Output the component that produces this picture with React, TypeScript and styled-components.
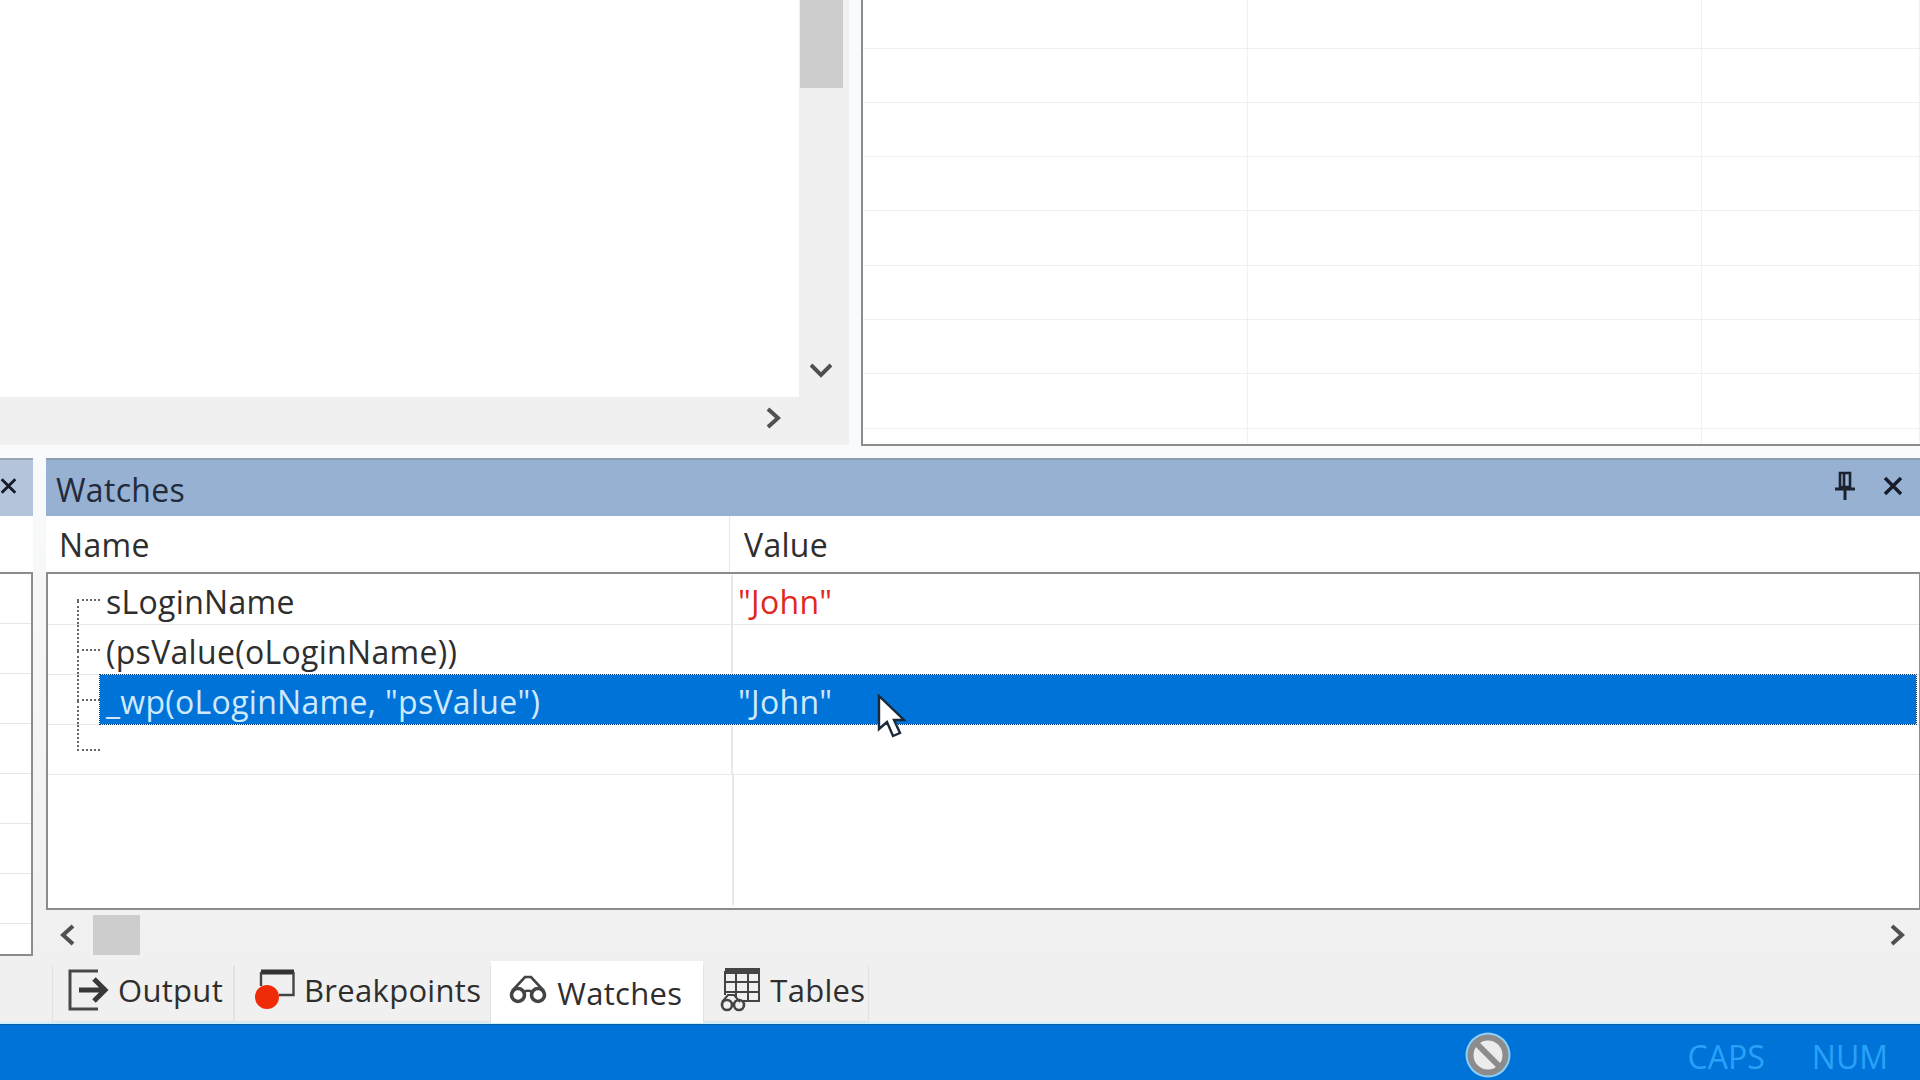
import styled, { createGlobalStyle } from "styled-components";

const GlobalStyle = createGlobalStyle`
    html, body {
        margin: 0;
        padding: 0;
        background: #f0f0f0;
    }
    * {
        box-sizing: border-box;
    }
`

const gridLines = [0, 1, 2, 3, 4, 5, 6, 7, 8]

const watches = [
    {name: 'sLoginName', value: '"John"', part: 'first'},
    {name: '(psValue(oLoginName))', value: '', part: 'middle'},
    {name: '_wp(oLoginName, "psValue")', value: '"John"', part: 'middle', selected: true},
    {name: '', value: '', part: 'last'},
]

const OutputIcon = () => (
    <svg width="41" height="42" viewBox="0 0 41 42" fill="none">
        <path d="M30 2H2v38h28" stroke="#484848" strokeWidth="3"/>
        <path d="M11 21h25M26 10l11 11-11 11" stroke="#383838" strokeWidth="5"/>
    </svg>
)

const BreakpointIcon = () => (
    <svg width="40" height="42" viewBox="0 0 40 42" fill="none">
        <path d="M6 3h33" stroke="#333" strokeWidth="5"/>
        <path d="M6 3v14M38.500 3v23H24" stroke="#444" strokeWidth="2.400"/>
        <circle cx="12" cy="28" r="12" fill="#f02c08"/>
    </svg>
)

const GlassesIcon = () => (
    <svg width="40" height="36" viewBox="0 0 40 36" fill="none" stroke="#444">
        <circle cx="10" cy="20" r="6.500" strokeWidth="3.600"/>
        <circle cx="30" cy="20" r="6.500" strokeWidth="3.600"/>
        <path d="M15 17c3-1.500 7-1.500 10 0M4 16 17 2h6l13 14" strokeWidth="2.600"/>
    </svg>
)

const TablesIcon = () => (
    <svg width="42" height="46" viewBox="0 0 42 46" fill="none" stroke="#444">
        <path d="M6 4h35" strokeWidth="6"/>
        <path d="M6 4v24M40 4v30H22M17 4v26M29 4v30M6 15h34M6 25h34" strokeWidth="2"/>
        <circle cx="8" cy="38" r="5" strokeWidth="2.600" fill="#f0f0f0"/>
        <circle cx="20" cy="38" r="5" strokeWidth="2.600" fill="#f0f0f0"/>
        <path d="M3 35l6-7h6l6 7" strokeWidth="2"/>
    </svg>
)

const PinIcon = () => (
    <svg width="24" height="30" viewBox="0 0 24 30" fill="none" stroke="#1c2230">
        <path d="M7 2h10v14H7zM11 3v13" strokeWidth="2.600"/>
        <path d="M2 18h20M12 18v11" strokeWidth="3"/>
    </svg>
)

const CloseIcon = () => (
    <svg width="20" height="20" viewBox="0 0 20 20" fill="none" stroke="#161c2a" strokeWidth="3.400">
        <path d="M2 2l16 16M18 2 2 18"/>
    </svg>
)

const Chevron = ({dir}: {dir: 'left' | 'right' | 'down'}) => {
    const points = {left: '15,2 5,11 15,20', right: '6,2 16,11 6,20', down: '1,6 11,16 21,6'}[dir]
    return (
        <svg width="22" height="22" viewBox="0 0 22 22" fill="none" stroke="#505050" strokeWidth="4">
            <polyline points={points}/>
        </svg>
    )
}

const BlockedIcon = () => (
    <svg width="46" height="46" viewBox="0 0 46 46" fill="none">
        <circle cx="23" cy="23" r="22.500" fill="#8fd0f6"/>
        <circle cx="23" cy="23" r="20.500" fill="#8c8c8c"/>
        <circle cx="23" cy="23" r="14.500" fill="#ececec"/>
        <path d="M12 12l22 22" stroke="#8c8c8c" strokeWidth="6"/>
    </svg>
)

const Cursor = () => (
    <CursorArt width="30" height="46" viewBox="0 0 30 46">
        <path d="M3 2v33l8-7 6 14 7-3-6-13h10z" fill="#fff" stroke="#1a2a3a" strokeWidth="2.400"/>
    </CursorArt>
)

export default function App() {
    return (
        <Page>
            <GlobalStyle/>
            <TopArea>
                <ListPane>
                    <ListBody>
                        <BlankList/>
                        <VScroll>
                            <ScrollThumb/>
                            <Chevron dir="down"/>
                        </VScroll>
                    </ListBody>
                    <HScroll>
                        <Chevron dir="right"/>
                    </HScroll>
                </ListPane>
                <DataGrid>
                    {gridLines.map(i => (
                        <DataRow key={i}>
                            <DataCell $width={385}/>
                            <DataCell $width={454}/>
                            <DataCell $width={218}/>
                        </DataRow>
                    ))}
                </DataGrid>
            </TopArea>

            <DockRow>
                <StubPanel>
                    <StubHeader><CloseIcon/></StubHeader>
                    <StubColumns/>
                    <StubGrid>
                        {gridLines.map(i => <StubRow key={i}/>)}
                    </StubGrid>
                </StubPanel>

                <WatchPanel>
                    <PanelHeader>
                        <PanelTitle>Watches</PanelTitle>
                        <PanelTools>
                            <PinIcon/>
                            <CloseIcon/>
                        </PanelTools>
                    </PanelHeader>
                    <ColumnHeaders>
                        <NameHeader>Name</NameHeader>
                        <ValueHeader>Value</ValueHeader>
                    </ColumnHeaders>
                    <WatchGrid>
                        {watches.map(w => (
                            <WatchRow key={w.part + w.name}>
                                <Guide>
                                    <GuideTop $part={w.part}/>
                                    <GuideBottom $part={w.part}/>
                                </Guide>
                                <WatchBody $selected={w.selected}>
                                    <WatchName $selected={w.selected}>{w.name}</WatchName>
                                    <WatchValue $selected={w.selected}>
                                        {w.value}
                                        {w.selected && <Cursor/>}
                                    </WatchValue>
                                </WatchBody>
                            </WatchRow>
                        ))}
                        <EmptyArea/>
                    </WatchGrid>
                    <BottomScroll>
                        <Chevron dir="left"/>
                        <BottomThumb/>
                        <Spacer/>
                        <Chevron dir="right"/>
                    </BottomScroll>
                </WatchPanel>
            </DockRow>

            <TabStrip>
                <Tab $lead={15} $trail={10}><OutputIcon/>Output</Tab>
                <Tab $lead={20} $trail={9}><BreakpointIcon/>Breakpoints</Tab>
                <Tab $lead={16} $trail={20} $active><GlassesIcon/>Watches</Tab>
                <Tab $lead={15} $trail={3}><TablesIcon/>Tables</Tab>
            </TabStrip>

            <StatusBar>
                <BlockedIcon/>
                <StatusKey $gap={177}>CAPS</StatusKey>
                <StatusKey $gap={47}>NUM</StatusKey>
            </StatusBar>
        </Page>
    )
}

const uiFont = `"Open Sans", "Noto Sans", sans-serif`

const Page = styled.div`
    width: 1920px;
    height: 1080px;
    overflow: hidden;
    display: flex;
    flex-direction: column;
    background: #f0f0f0;
    font-family: ${uiFont};
    font-size: 32px;
    letter-spacing: 0.3px;
    color: #2e2e2e;
`

const TopArea = styled.div`
    height: 458px;
    flex: none;
    display: flex;
    background: #f9fafb;
`

const ListPane = styled.div`
    width: 849px;
    height: 445px;
    flex: none;
    display: flex;
    flex-direction: column;
    background: #f0f0f0;
`

const ListBody = styled.div`
    height: 397px;
    flex: none;
    display: flex;
`

const BlankList = styled.div`
    width: 799px;
    background: #fff;
`

const VScroll = styled.div`
    flex: 1;
    display: flex;
    flex-direction: column;
    align-items: center;
    justify-content: space-between;
    padding-right: 6px;
    padding-bottom: 16px;
    background: #f0f0f0;
`

const ScrollThumb = styled.div`
    width: 43px;
    height: 88px;
    background: #cdcdcd;
`

const HScroll = styled.div`
    flex: 1;
    display: flex;
    align-items: center;
    justify-content: flex-end;
    padding: 0 65px 6px 0;
`

const DataGrid = styled.div`
    margin-left: 12px;
    flex: 1;
    height: 446px;
    overflow: hidden;
    background: #fff;
    border-left: 2px solid #8c8c8c;
    border-bottom: 2px solid #8c8c8c;
`

const DataRow = styled.div`
    height: 54.3px;
    display: flex;
    border-bottom: 1px solid #eeeeee;

    &:first-child {
        height: 48.5px;
    }
`

const DataCell = styled.div<{ $width: number }>`
    width: ${p => p.$width}px;
    flex: none;
    border-right: 1px solid #f0f0f0;
`

const DockRow = styled.div`
    height: 503px;
    flex: none;
    display: flex;
    align-items: flex-start;
    gap: 13px;
    background: linear-gradient(#f9fafb 0, #f0f0f0 100%);
`

const StubPanel = styled.div`
    width: 33px;
    height: 498px;
    flex: none;
    display: flex;
    flex-direction: column;
    background: #fff;
`

const StubHeader = styled.div`
    height: 58px;
    flex: none;
    display: flex;
    align-items: flex-start;
    justify-content: flex-end;
    padding: 16px 16px 0 0;
    background: #b4c4da;
    border-top: 2px solid #9aa6b6;
    overflow: hidden;
`

const StubColumns = styled.div`
    height: 56px;
    flex: none;
`

const StubGrid = styled.div`
    flex: 1;
    overflow: hidden;
    border-top: 2px solid #8c8c8c;
    border-right: 2px solid #8c8c8c;
    border-bottom: 2px solid #8c8c8c;
`

const StubRow = styled.div`
    height: 50px;
    border-bottom: 1px solid #e6e6e6;
`

const WatchPanel = styled.div`
    flex: 1;
    min-width: 0;
    height: 100%;
    display: flex;
    flex-direction: column;
`

const PanelHeader = styled.div`
    height: 58px;
    flex: none;
    display: flex;
    align-items: center;
    justify-content: space-between;
    padding: 2px 17px 0 10px;
    background: #96b1d2;
    border-top: 2px solid #8d9db2;
`

const PanelTitle = styled.div`
    color: #232a3a;
`

const PanelTools = styled.div`
    display: flex;
    align-items: center;
    gap: 26px;
    margin-top: -6px;
`

const ColumnHeaders = styled.div`
    height: 56px;
    flex: none;
    display: flex;
    align-items: center;
    background: #fff;
`

const NameHeader = styled.div`
    width: 684px;
    height: 100%;
    display: flex;
    align-items: center;
    padding-left: 13px;
    border-right: 1px solid #e8e8e8;
`

const ValueHeader = styled.div`
    padding-left: 14px;
`

const WatchGrid = styled.div`
    height: 338px;
    flex: none;
    display: flex;
    flex-direction: column;
    padding-top: 1px;
    background: #fff;
    border: 2px solid #8c8c8c;
    border-right-width: 1px;
`

const WatchRow = styled.div`
    height: 50px;
    flex: none;
    display: flex;
    border-bottom: 1px solid #e8e8e8;
`

const Guide = styled.div`
    width: 23px;
    margin-left: 29px;
    flex: none;
    display: flex;
    flex-direction: column;
`

const GuideTop = styled.div<{ $part: string }>`
    flex: 1;
    border-bottom: 2px dotted #666;
    border-left: ${p => p.$part === 'first' ? 'none' : '2px dotted #666'};
`

const GuideBottom = styled.div<{ $part: string }>`
    flex: 1;
    border-left: ${p => p.$part === 'last' ? 'none' : '2px dotted #666'};
`

const WatchBody = styled.div<{ $selected?: boolean }>`
    flex: 1;
    display: flex;
    align-items: center;
    position: relative;
    margin-right: 3px;
    background: ${p => p.$selected ? '#0073d8' : 'transparent'};
    color: ${p => p.$selected ? '#cfeaff' : 'inherit'};
    outline: ${p => p.$selected ? '1px dotted #0a3a70' : 'none'};
`

const WatchName = styled.div<{ $selected?: boolean }>`
    width: 633px;
    height: 100%;
    flex: none;
    display: flex;
    align-items: center;
    padding: 3px 0 0 6px;
    border-right: 2px solid ${p => p.$selected ? 'transparent' : '#e8e8e8'};
    white-space: nowrap;
`

const WatchValue = styled.div<{ $selected?: boolean }>`
    padding: 3px 0 0 5px;
    color: ${p => p.$selected ? '#cfeaff' : '#e0291c'};
`

const EmptyArea = styled.div`
    flex: 1;
    margin-left: 684px;
    margin-bottom: 3px;
    border-left: 2px solid #e8e8e8;
`

const CursorArt = styled.svg`
    position: absolute;
    left: 776px;
    top: 19px;
`

const BottomScroll = styled.div`
    flex: 1;
    display: flex;
    align-items: center;
    padding: 0 12px 2px 12px;
`

const BottomThumb = styled.div`
    width: 47px;
    height: 40px;
    margin-left: 13px;
    background: #cdcdcd;
`

const Spacer = styled.div`
    flex: 1;
`

const TabStrip = styled.div`
    height: 63px;
    flex: none;
    display: flex;
    align-items: flex-start;
    padding-left: 52px;
    box-shadow: inset 0 -2px 0 #cfeefc;
`

const Tab = styled.div<{ $active?: boolean; $lead: number; $trail: number }>`
    height: ${p => p.$active ? '62px' : '57px'};
    margin-top: ${p => p.$active ? '0' : '4px'};
    padding: ${p => p.$active ? '2px' : '0'} ${p => p.$trail}px ${p => p.$active ? '0' : '8px'} ${p => p.$lead}px;
    display: flex;
    align-items: center;
    gap: 9px;
    font-size: 31px;
    background: ${p => p.$active ? '#fff' : '#f0f0f0'};
    border: 1px solid ${p => p.$active ? '#fff' : '#e2e2e2'};
    border-top-color: ${p => p.$active ? '#fff' : '#f0f0f0'};
`

const StatusBar = styled.div`
    height: 56px;
    flex: none;
    display: flex;
    align-items: center;
    justify-content: flex-end;
    padding: 4px 32px 0 0;
    background: #0073d8;
    border-top: 1px solid #0a5ea8;
`

const StatusKey = styled.div<{ $gap: number }>`
    margin-left: ${p => p.$gap}px;
    padding-top: 4px;
    color: #28a2f8;
    font-size: 32px;
    letter-spacing: 0;
`
